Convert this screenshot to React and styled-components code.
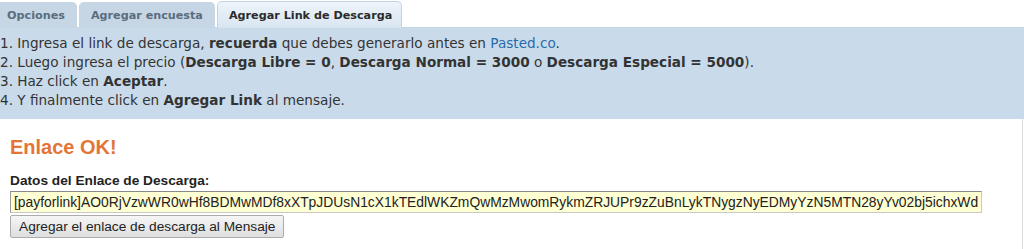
import React from "react";
import styled, { createGlobalStyle } from "styled-components";

const Global = createGlobalStyle`
  html, body { margin: 0; padding: 0; background: #fff; overflow: hidden; }
  body { width: 1024px; height: 249px; }
`;

const Page = styled.div`
  margin-left: -4px;
  width: 1028px;
  font-family: "DejaVu Sans", Verdana, sans-serif;
`;

const TabBar = styled.ul`
  display: flex;
  gap: 2px;
  list-style: none;
  margin: 0 0 0 -1px;
  padding: 0;
  height: 27px;
  align-items: flex-end;
  border-bottom: 1px solid #c4d6e6;
`;

const Tab = styled.li`
  height: ${(p) => (p.$active ? "27px" : "25px")};
  box-sizing: border-box;
  padding: ${(p) => (p.$active ? "0 9px 0 11px" : "0 11px")};
  display: flex;
  align-items: center;
  font-size: 11.2px;
  font-weight: bold;
  color: ${(p) => (p.$active ? "#2b2b2b" : "#5a6d7e")};
  background: ${(p) =>
    p.$active ? "linear-gradient(#eef4fa, #d8e5f1)" : "#c6d6e4"};
  border: 1px solid ${(p) => (p.$active ? "#c2d4e4" : "#c6d6e4")};
  border-bottom: none;
  border-radius: 5px 5px 0 0;
  margin-bottom: ${(p) => (p.$active ? "-1px" : "0")};
`;

const Info = styled.ol`
  margin: 0;
  padding: 6px 0 9px 4px;
  list-style: none;
  background: #c9dbea;
  font-size: 13.6px;
  line-height: 19px;
  color: #333;
`;

const Link = styled.a`
  color: #2a6aa8;
  text-decoration: none;
`;

const Panel = styled.div`
  padding: 14px 14px 12px 14px;
  border-right: 1px solid #dcdcdc;
  margin-right: 1px;
  font-family: "Liberation Sans", Arial, sans-serif;
`;

const Title = styled.h2`
  margin: 0 0 12px;
  font-size: 20px;
  font-weight: bold;
  color: #e37537;
  line-height: 28px;
`;

const Label = styled.div`
  font-size: 13.7px;
  font-weight: bold;
  color: #222;
  margin-bottom: 2px;
  line-height: 16px;
`;

const Input = styled.input`
  display: block;
  box-sizing: border-box;
  width: 972px;
  height: 22px;
  padding: 1px 3px;
  font-family: "Liberation Sans", Arial, sans-serif;
  font-size: 13.85px;
  color: #222;
  background: #ffffd4;
  border: 1px solid #c8c8c8;
  border-top-color: #8a8a8a;
  border-left-color: #9a9a9a;
  outline: none;
`;

const Button = styled.button`
  display: block;
  margin-top: 2px;
  height: 23px;
  padding: 0 8px;
  font-family: "Liberation Sans", Arial, sans-serif;
  font-size: 13.7px;
  color: #222;
  background: linear-gradient(#f6f6f6, #dedede);
  border: 1px solid #acacac;
  border-radius: 2px;
`;

const payload =
  "[payforlink]AO0RjVzwWR0wHf8BDMwMDf8xXTpJDUsN1cX1kTEdlWKZmQwMzMwomRykmZRJUPr9zZuBnLykTNygzNyEDMyYzN5MTN28yYv02bj5ichxWdwZXa";

export default function App() {
  return (
    <>
      <Global />
      <Page>
        <TabBar>
          <Tab>Opciones</Tab>
          <Tab>Agregar encuesta</Tab>
          <Tab $active>Agregar Link de Descarga</Tab>
        </TabBar>
        <Info>
          <li>
            1. Ingresa el link de descarga, <b>recuerda</b> que debes generarlo antes en{" "}
            <Link href="#">Pasted.co</Link>.
          </li>
          <li>
            2. Luego ingresa el precio (<b>Descarga Libre = 0</b>, <b>Descarga Normal = 3000</b> o{" "}
            <b>Descarga Especial = 5000</b>).
          </li>
          <li>
            3. Haz click en <b>Aceptar</b>.
          </li>
          <li>
            4. Y finalmente click en <b>Agregar Link</b> al mensaje.
          </li>
        </Info>
        <Panel>
          <Title>Enlace OK!</Title>
          <Label>Datos del Enlace de Descarga:</Label>
          <Input readOnly value={payload} />
          <Button>Agregar el enlace de descarga al Mensaje</Button>
        </Panel>
      </Page>
    </>
  );
}
